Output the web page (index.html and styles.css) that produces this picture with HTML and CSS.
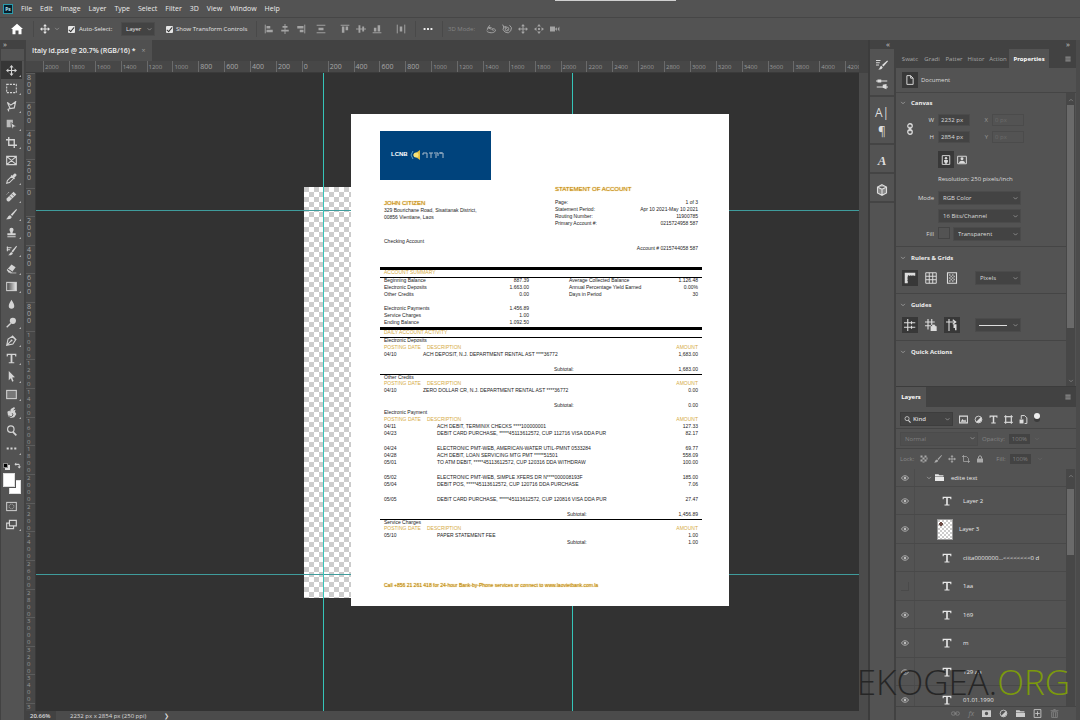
FILE: index.html
```html
<!DOCTYPE html>
<html lang="en">
<head>
<meta charset="utf-8">
<title>Italy id.psd</title>
<link rel="stylesheet" href="styles.css">
</head>
<body>
<svg class="sprite" aria-hidden="true">
  <symbol id="move" viewBox="0 0 16 16"><path d="M8 0l3 3.500H8.800v3.700h3.700V5L16 8l-3.500 3V8.800H8.800v3.700H11L8 16l-3-3.500h2.200V8.800H3.500V11L0 8l3.500-3v2.200h3.700V3.500H5z" fill="currentColor"/></symbol>
  <symbol id="marquee" viewBox="0 0 16 16"><rect x="1" y="2" width="14" height="12" fill="none" stroke="currentColor" stroke-width="1.5" stroke-dasharray="3 1.6"/></symbol>
  <symbol id="lasso" viewBox="0 0 16 16"><path d="M2 2l5 4 7-5-2 9-6 1zM6 11l-3 1 1 3" fill="none" stroke="currentColor" stroke-width="1.7"/></symbol>
  <symbol id="objsel" viewBox="0 0 16 16"><path d="M1 1h9v5H7v6H1z" fill="currentColor" opacity=".8"/><path d="M7 5l8 6-4 .5L9 15z" fill="currentColor" stroke="#535353"/></symbol>
  <symbol id="crop" viewBox="0 0 16 16"><path d="M4 0v12h12M0 4h12v12" fill="none" stroke="currentColor" stroke-width="2"/></symbol>
  <symbol id="frame" viewBox="0 0 16 16"><path d="M1 2h14v12H1zM1 2l14 12M15 2L1 14" fill="none" stroke="currentColor" stroke-width="1.6"/></symbol>
  <symbol id="dropper" viewBox="0 0 16 16"><path d="M1 15l1-4 6-6 3 3-6 6z" fill="none" stroke="currentColor" stroke-width="1.5"/><path d="M7 4l5 5 1-1-1-1 3-3c1-2-1-4-3-3L9 4 8 3z" fill="currentColor"/></symbol>
  <symbol id="heal" viewBox="0 0 16 16"><path d="M1 11l10-10 4 4L5 15c-3 1-5-1-4-4z" fill="currentColor"/><path d="M5 7l4 4M8 4l4 4" stroke="#535353"/><path d="M1 5l4-4" stroke="currentColor" stroke-dasharray="2 1"/></symbol>
  <symbol id="brush" viewBox="0 0 16 16"><path d="M15 0l1 1-7 9-2-2z" fill="currentColor"/><path d="M6 9l2.500 2.500C7 15 4 15 0 15c3-2 2-5 6-6z" fill="currentColor"/></symbol>
  <symbol id="stamp" viewBox="0 0 16 16"><path d="M8 1a3 3 0 013 3c0 2-1.500 2-1.500 5H14v3H2V9h4.500C6.500 6 5 6 5 4a3 3 0 013-3zM2 13.500h12V15H2z" fill="currentColor"/></symbol>
  <symbol id="history" viewBox="0 0 16 16"><path d="M15 1l1 1-6 9-2-2zM8 10l2 2c-1 3-4 3-7 3 3-2 2-4 5-5z" fill="currentColor"/><path d="M1 4h7M1 7h5M2 2v7" stroke="currentColor" stroke-width="1.500"/></symbol>
  <symbol id="eraser" viewBox="0 0 16 16"><path d="M1 10l7-8 6 4-6 8H4z" fill="currentColor"/><path d="M3 9l6 4" stroke="#535353" stroke-width="1.500"/><path d="M6 14.500h9" stroke="currentColor"/></symbol>
  <symbol id="gradient" viewBox="0 0 16 16"><defs><linearGradient id="gr"><stop stop-color="#444"/><stop offset="1" stop-color="#e8e8e8"/></linearGradient></defs><rect x="1" y="2" width="14" height="12" fill="url(#gr)" stroke="currentColor" stroke-width="1.500"/></symbol>
  <symbol id="drop" viewBox="0 0 16 16"><path d="M8 1c2 4 4 6 4 9a4 4 0 01-8 0c0-3 2-5 4-9z" fill="currentColor"/></symbol>
  <symbol id="dodge" viewBox="0 0 16 16"><circle cx="10" cy="5.500" r="4.500" fill="currentColor"/><path d="M7 9l-6 6" stroke="currentColor" stroke-width="2"/></symbol>
  <symbol id="pen" viewBox="0 0 16 16"><path d="M1 15l2-9 6-4 5 5-4 6zM1 15l6-6M9 1l6 6" fill="none" stroke="currentColor" stroke-width="1.600"/><circle cx="8" cy="8" r="1.500" fill="currentColor"/></symbol>
  <symbol id="type" viewBox="0 0 16 16"><path d="M1 1h14v4h-1.500L13 3H9.300v10.500H12V15H4v-1.500h2.700V3H3l-.5 2H1z" fill="currentColor"/></symbol>
  <symbol id="arrow" viewBox="0 0 16 16"><path d="M4 0l9 9-4 .5 2 5-2 1-2-5-3 3z" fill="currentColor"/></symbol>
  <symbol id="rect" viewBox="0 0 16 16"><rect x="1" y="2" width="14" height="12" fill="#777" stroke="currentColor" stroke-width="1.500"/></symbol>
  <symbol id="hand" viewBox="0 0 16 16"><path d="M2 7l3-2 1 2 1-4 5-3 1 2-3 3 4-1-1 3 2 3-3 5-5 1-4-3z" fill="currentColor"/><path d="M4 12a3 3 0 105-3" fill="none" stroke="#535353" stroke-width="1.300"/></symbol>
  <symbol id="zoom" viewBox="0 0 16 16"><circle cx="7" cy="6" r="4.700" fill="none" stroke="currentColor" stroke-width="1.700"/><path d="M10 10l5 5" stroke="currentColor" stroke-width="2.400"/></symbol>
  <symbol id="dots" viewBox="0 0 16 16"><path d="M1 6.500h3v3H1zM6.500 6.500h3v3h-3zM12 6.500h3v3h-3z" fill="currentColor"/></symbol>
  <symbol id="mask" viewBox="0 0 16 16"><rect x="1" y="2" width="14" height="12" fill="none" stroke="currentColor" stroke-width="1.400"/><circle cx="8" cy="8" r="3.500" fill="none" stroke="currentColor" stroke-dasharray="1.500 1"/></symbol>
  <symbol id="screens" viewBox="0 0 16 16"><path d="M5 2h10v8H5zM5 6H1v8h10v-4" fill="none" stroke="currentColor" stroke-width="1.700"/></symbol>
  <symbol id="home" viewBox="0 0 16 16"><path d="M8 1l8 7h-2v7h-4v-5H6v5H2V8H0z" fill="currentColor"/></symbol>
  <symbol id="chev" viewBox="0 0 16 16"><path d="M3 5l5 5 5-5" fill="none" stroke="currentColor" stroke-width="2"/></symbol>
  <symbol id="al" viewBox="0 0 16 16"><path d="M2 1v14" stroke="currentColor" stroke-width="1.500"/><path d="M4 3h6v4H4zM4 9h10v4H4z" fill="currentColor"/></symbol>
  <symbol id="ac" viewBox="0 0 16 16"><path d="M8 0v16" stroke="currentColor" stroke-width="1.500"/><path d="M4 3h8v3H4zM2 9h12v3H2z" fill="currentColor"/></symbol>
  <symbol id="bars" viewBox="0 0 16 16"><path d="M1 2h14M1 14h14" stroke="currentColor" stroke-width="1.500"/><path d="M4 6h8v4H4z" fill="currentColor"/></symbol>
  <symbol id="orbit" viewBox="0 0 16 16"><path d="M3 10C0 7 5 4 9 6M6 2L3 6l5 2M1 11c3 4 12 4 14 0 1-3-3-4-6-3l3 3" fill="none" stroke="currentColor" stroke-width="1.600"/></symbol>
  <symbol id="roll" viewBox="0 0 16 16"><path d="M3 4a6.500 6.500 0 109-2M1 1l2 4 4-1" fill="none" stroke="currentColor" stroke-width="1.600"/><circle cx="8" cy="8" r="3" fill="none" stroke="currentColor" stroke-width="1.400"/><path d="M5 5l5 5" stroke="currentColor"/></symbol>
  <symbol id="slide" viewBox="0 0 16 16"><path d="M8 0l3 4H5zM8 16l3-4H5zM0 8l4-3v6zM16 8l-4-3v6zM6.500 6.500h3v3h-3z" fill="currentColor"/></symbol>
  <symbol id="cam" viewBox="0 0 16 16"><path d="M0 4h8v8H0zM8 8l3-3v6zM15 4l-3 4 3 4" fill="currentColor"/></symbol>
  <symbol id="brushset" viewBox="0 0 16 16"><path d="M0 2h6M0 5h5M0 8h4" stroke="currentColor" stroke-width="1.300"/><path d="M15 2l1 1-6 7-2-2zM7 9l2 2c-1 3-3 3-6 3 2-1 2-4 4-5z" fill="currentColor"/></symbol>
  <symbol id="sliders" viewBox="0 0 16 16"><path d="M0 4h15M1 12h15" stroke="currentColor" stroke-width="1.600"/><path d="M2 2h5v4H2zM9 9l5-1v7l-5-2z" fill="currentColor"/></symbol>
  <symbol id="cube" viewBox="0 0 16 16"><path d="M8 1l6 3v8l-6 3-6-3V4zM2 4l6 3 6-3M8 7v8" fill="#888" stroke="currentColor" stroke-width="1.500"/></symbol>
  <symbol id="page" viewBox="0 0 16 16"><path d="M3 1h6l4 4v10H3zM9 1v4h4" fill="none" stroke="currentColor" stroke-width="1.500"/></symbol>
  <symbol id="link" viewBox="0 0 16 16"><rect x="5" y="1" width="6" height="6" rx="3" fill="none" stroke="currentColor" stroke-width="1.700"/><rect x="5" y="9" width="6" height="6" rx="3" fill="none" stroke="currentColor" stroke-width="1.700"/><path d="M8 5v6" stroke="currentColor" stroke-width="1.700"/></symbol>
  <symbol id="portrait" viewBox="0 0 16 16"><path d="M2 1h12v14H2z" fill="none" stroke="currentColor" stroke-width="1.500"/><circle cx="8" cy="5" r="2" fill="currentColor"/><path d="M5 8h6v4H9.500v2h-3v-2H5z" fill="currentColor"/></symbol>
  <symbol id="landscape" viewBox="0 0 16 16"><path d="M1 2h14v12H1z" fill="none" stroke="currentColor" stroke-width="1.500"/><circle cx="8" cy="6" r="2.300" fill="currentColor"/><path d="M3 13c1-5 9-5 10 0z" fill="currentColor"/></symbol>
  <symbol id="rulers" viewBox="0 0 16 16"><path d="M1 1h14v4H5v10H1z" fill="currentColor"/><path d="M6 4v1M9 4v1M12 4v1M4 8h1M4 11h1" stroke="#383838"/></symbol>
  <symbol id="grid" viewBox="0 0 16 16"><path d="M1 1h14v14H1zM5.700 1v14M10.300 1v14M1 5.700h14M1 10.300h14" fill="none" stroke="currentColor" stroke-width="1.300"/></symbol>
  <symbol id="pixgrid" viewBox="0 0 16 16"><path d="M2 1h12v14H2z" fill="none" stroke="currentColor" stroke-width="1.500"/><path d="M4 3h2v2H4zM8 3h2v2H8zM6 5h2v2H6zM10 5h2v2h-2zM4 7h2v2H4zM8 7h2v2H8zM6 9h2v2H6zM10 9h2v2h-2zM4 11h2v2H4zM8 11h2v2H8z" fill="currentColor" opacity=".7"/></symbol>
  <symbol id="guides" viewBox="0 0 16 16"><path d="M5 0v16M0 5h15M0 11h15M10 3v4M10 9v4" stroke="currentColor" stroke-width="1.500"/></symbol>
  <symbol id="guidelock" viewBox="0 0 16 16"><path d="M4 0v14M9 0v8M0 4h13M0 9h8" stroke="currentColor" stroke-width="1.500"/><path d="M8 10h7v6H8zM10 10V8h3v2" fill="currentColor" stroke="currentColor"/></symbol>
  <symbol id="smart" viewBox="0 0 16 16"><path d="M4 0v16M0 4h12M9 1l4 3-4 3" fill="none" stroke="currentColor" stroke-width="1.500"/><path d="M10 7h4v8h-2v-3h-2z" fill="currentColor"/></symbol>
  <symbol id="image" viewBox="0 0 16 16"><path d="M1 2h14v12H1z" fill="none" stroke="currentColor" stroke-width="1.800"/><path d="M3 12l3-5 3 3 2-2 2 4z" fill="currentColor"/></symbol>
  <symbol id="adjust" viewBox="0 0 16 16"><circle cx="8" cy="8" r="6" fill="none" stroke="currentColor" stroke-width="1.500"/><path d="M12.500 3.500a6.500 6.500 0 01-9 9z" fill="currentColor"/></symbol>
  <symbol id="shape" viewBox="0 0 16 16"><path d="M3 3h10v10H3zM3 0v16M13 0v16M0 3h16M0 13h16" fill="none" stroke="currentColor" stroke-width="1.500"/></symbol>
  <symbol id="smartobj" viewBox="0 0 16 16"><path d="M4 7V1h6l4 4v10h-4" fill="none" stroke="currentColor" stroke-width="1.700"/><path d="M1 8h7v7H1z" fill="currentColor"/></symbol>
  <symbol id="checks" viewBox="0 0 16 16"><path d="M1 1h4v4H1zM9 1h4v4H9zM5 5h4v4H5zM1 9h4v4H1zM9 9h4v4H9zM13 5h2v4h-2zM5 13h4v2H5z" fill="currentColor"/></symbol>
  <symbol id="lock" viewBox="0 0 16 16"><path d="M2 7h12v8H2z" fill="currentColor"/><path d="M5 7V4c0-3 6-3 6 0v3" fill="none" stroke="currentColor" stroke-width="2"/></symbol>
  <symbol id="nest" viewBox="0 0 16 16"><path d="M3 0v13h13M0 3h9l4 4v9" fill="none" stroke="currentColor" stroke-width="1.500"/></symbol>
  <symbol id="eye" viewBox="0 0 16 16"><path d="M1 8c3-6 11-6 14 0-3 6-11 6-14 0z" fill="none" stroke="currentColor" stroke-width="1.600"/><circle cx="8" cy="8" r="2.600" fill="currentColor"/></symbol>
  <symbol id="folder" viewBox="0 0 16 16"><path d="M0 2h6l2 2h7v2H0zM0 7h16v7H0z" fill="currentColor"/></symbol>
  <symbol id="chain" viewBox="0 0 16 16"><rect x="0.800" y="5" width="7" height="6" rx="3" fill="none" stroke="currentColor" stroke-width="1.500"/><rect x="8" y="5" width="7" height="6" rx="3" fill="none" stroke="currentColor" stroke-width="1.500"/><path d="M5 8h6" stroke="currentColor"/></symbol>
  <symbol id="addmask" viewBox="0 0 16 16"><path d="M0 2h16v12H0zM8 5a3 3 0 100 6 3 3 0 000-6z" fill="currentColor" fill-rule="evenodd"/></symbol>
  <symbol id="new" viewBox="0 0 16 16"><path d="M2 1h12v14H2zM8 4v8M4 8h8" fill="none" stroke="currentColor" stroke-width="1.500"/></symbol>
  <symbol id="trash" viewBox="0 0 16 16"><path d="M1 3h14M6 1h4M3 5h10v10H3zM6 6v8M10 6v8" fill="none" stroke="currentColor" stroke-width="1.500"/></symbol>
  <symbol id="burger" viewBox="0 0 16 16"><path d="M1 3h14M1 8h14M1 13h14" stroke="currentColor" stroke-width="2"/></symbol>
  <symbol id="swap" viewBox="0 0 16 16"><path d="M1 5l4-4v3h6c2 0 2 2 2 6h3l-4 5-4-5h3V7H5v2z" fill="currentColor"/></symbol>
</svg>

<div class="top-tab"></div>
<nav class="menubar">
  <span class="ps">Ps</span>
  <button>File</button><button>Edit</button><button>Image</button><button>Layer</button><button>Type</button><button>Select</button><button>Filter</button><button>3D</button><button>View</button><button>Window</button><button>Help</button>
</nav>

<div class="options">
  <button class="home" aria-label="Home"><svg><use href="#home"/></svg></button>
  <i class="sep"></i>
  <button class="current" aria-label="Move tool"><svg><use href="#move"/></svg><svg class="tiny"><use href="#chev"/></svg></button>
  <label class="check"><input type="checkbox" checked>Auto-Select:</label>
  <select class="auto" aria-label="Auto-select"><option>Layer</option></select>
  <label class="check show"><input type="checkbox" checked>Show Transform Controls</label>
  <i class="sep"></i>
  <div class="group">
    <button aria-label="Align left"><svg><use href="#al"/></svg></button>
    <button aria-label="Align centre"><svg><use href="#ac"/></svg></button>
    <button aria-label="Align right"><svg class="flip"><use href="#al"/></svg></button>
  </div>
  <div class="group"><button aria-label="Distribute rows"><svg><use href="#bars"/></svg></button></div>
  <div class="group wide">
    <button aria-label="Align top"><svg class="quarter"><use href="#al"/></svg></button>
    <button aria-label="Align middle"><svg class="quarter"><use href="#ac"/></svg></button>
    <button aria-label="Align bottom"><svg class="back"><use href="#al"/></svg></button>
  </div>
  <div class="group last"><button aria-label="Distribute columns"><svg class="quarter"><use href="#bars"/></svg></button></div>
  <i class="sep"></i>
  <div class="group bright"><button aria-label="More"><svg><use href="#dots"/></svg></button></div>
  <i class="sep"></i>
  <span class="mode3d">3D Mode:</span>
  <div class="group">
    <button aria-label="Orbit"><svg><use href="#orbit"/></svg></button>
    <button aria-label="Roll"><svg><use href="#roll"/></svg></button>
    <button aria-label="Pan"><svg><use href="#move"/></svg></button>
    <button aria-label="Slide"><svg><use href="#slide"/></svg></button>
    <button aria-label="Camera"><svg><use href="#cam"/></svg></button>
  </div>
</div>

<div class="workspace">
  <aside class="tools">
    <div class="collapse">»</div>
    <div class="grip"></div>
    <button class="on" aria-label="Move"><svg><use href="#move"/></svg></button>
    <button aria-label="Marquee"><svg><use href="#marquee"/></svg></button>
    <button aria-label="Lasso"><svg><use href="#lasso"/></svg></button>
    <button aria-label="Object selection"><svg><use href="#objsel"/></svg></button>
    <button aria-label="Crop"><svg><use href="#crop"/></svg></button>
    <button class="solo" aria-label="Frame"><svg><use href="#frame"/></svg></button>
    <button aria-label="Eyedropper"><svg><use href="#dropper"/></svg></button>
    <button aria-label="Healing brush"><svg><use href="#heal"/></svg></button>
    <button aria-label="Brush"><svg><use href="#brush"/></svg></button>
    <button aria-label="Clone stamp"><svg><use href="#stamp"/></svg></button>
    <button aria-label="History brush"><svg><use href="#history"/></svg></button>
    <button aria-label="Eraser"><svg><use href="#eraser"/></svg></button>
    <button aria-label="Gradient"><svg><use href="#gradient"/></svg></button>
    <button class="solo" aria-label="Blur"><svg><use href="#drop"/></svg></button>
    <button aria-label="Dodge"><svg><use href="#dodge"/></svg></button>
    <button aria-label="Pen"><svg><use href="#pen"/></svg></button>
    <button aria-label="Type"><svg><use href="#type"/></svg></button>
    <button aria-label="Path selection"><svg><use href="#arrow"/></svg></button>
    <button aria-label="Rectangle"><svg><use href="#rect"/></svg></button>
    <button aria-label="Hand"><svg><use href="#hand"/></svg></button>
    <button class="solo" aria-label="Zoom"><svg><use href="#zoom"/></svg></button>
    <button aria-label="Edit toolbar"><svg><use href="#dots"/></svg></button>
    <div class="defaults"><span class="bw"></span><svg><use href="#swap"/></svg></div>
    <div class="swatches"><span></span><span></span></div>
    <button class="solo" aria-label="Quick mask"><svg><use href="#mask"/></svg></button>
    <button aria-label="Screen mode"><svg><use href="#screens"/></svg></button>
  </aside>

  <main class="document">
    <div class="tabs"><button class="tab">Italy id.psd @ 20.7% (RGB/16) * <span>×</span></button></div>
    <div class="hruler">
      <span class="k">2000</span><span class="k">1800</span><span class="k">1600</span><span class="k">1400</span><span class="k">1200</span><span class="k">1000</span><span>800</span><span>600</span><span>400</span><span>200</span><span>0</span><span>200</span><span>400</span><span>600</span><span>800</span><span class="k">1000</span><span class="k">1200</span><span class="k">1400</span><span class="k">1600</span><span class="k">1800</span><span class="k">2000</span><span class="k">2200</span><span class="k">2400</span><span class="k">2600</span><span class="k">2800</span><span class="k">3000</span><span class="k">3200</span><span class="k">3400</span><span class="k">3600</span><span class="k">3800</span><span class="k">4000</span><span class="k last">4200</span>
    </div>
    <div class="stage">
      <div class="vruler">
        <span>800</span><span>600</span><span>400</span><span>200</span><span>0</span><span>200</span><span>400</span><span>600</span><span>800</span><span class="k">1000</span><span class="k">1200</span><span class="k">1400</span><span class="k">1600</span><span class="k">1800</span><span class="k">2000</span><span class="k">2200</span><span class="k">2400</span><span class="k">2600</span><span class="k">2800</span><span class="k">3000</span><span class="k">3200</span><span class="k">3400</span><span class="k last">3</span>
      </div>
      <div class="canvas">
        <div class="checker"></div>
        <i class="guide h one"></i><i class="guide h two"></i><i class="guide v one"></i><i class="guide v two"></i>
        <article class="paper">
          <div class="logo">
            <b>LCNB</b>
            <svg class="mark" viewBox="0 0 12 10"><path d="M3 1L1 5l2 4" fill="none" stroke="#5aa0c8"/><path d="M3 5l7-5v10z" fill="#e2c044"/><circle cx="6" cy="5" r="2.500" fill="#f6e27a"/></svg>
            <svg class="script" viewBox="0 0 22 8"><path d="M1 2h4v5M1 2v2M7 2h4M9 2v5M12 2h4v3M14 3v4M17 2h4v5M19 1v2" fill="none" stroke="#a9bccb"/></svg>
          </div>
          <div class="head">
            <div class="who">
              <h2>JOHN CITIZEN</h2>
              <p>329 Bourichane Road, Sisattanak District,<br>00856 Vientiane, Laos</p>
              <p class="kind">Checking Account</p>
            </div>
            <div class="meta">
              <h2>STATEMENT OF ACCOUNT</h2>
              <dl>
                <dt>Page:</dt><dd>1 of 3</dd>
                <dt>Statement Period:</dt><dd>Apr 10 2021-May 10 2021</dd>
                <dt>Routing Number:</dt><dd>11900785</dd>
                <dt>Primary Account #:</dt><dd>0215724958 587</dd>
              </dl>
              <p class="acct">Account # 0215744058 587</p>
            </div>
          </div>
          <h3 class="band">ACCOUNT SUMMARY</h3>
          <div class="summary">
            <dl>
              <dt>Beginning Balance</dt><dd>887.39</dd>
              <dt>Electronic Deposits</dt><dd>1.663.00</dd>
              <dt>Other Credits</dt><dd>0.00</dd>
              <dt class="more">Electronic Payments</dt><dd class="more">1.456.89</dd>
              <dt>Service Charges</dt><dd>1.00</dd>
              <dt>Ending Balance</dt><dd>1.092.50</dd>
            </dl>
            <dl>
              <dt>Average Collected Balance</dt><dd>1.126.48</dd>
              <dt>Annual Percentage Yield Earned</dt><dd>0.00%</dd>
              <dt>Days in Period</dt><dd>30</dd>
            </dl>
          </div>
          <h3 class="band">DAILY ACCOUNT ACTIVITY</h3>
          <table class="first">
            <caption>Electronic Deposits</caption>
            <tr><th>POSTING DATE</th><th>DESCRIPTION</th><th>AMOUNT</th></tr>
            <tr><td>04/10</td><td>ACH DEPOSIT, N.J. DEPARTMENT RENTAL AST ****36772</td><td>1,683.00</td></tr>
            <tr class="sum gap"><td></td><td>Subtotal:</td><td>1,683.00</td></tr>
          </table>
          <table class="ruled">
            <caption>Other Credits</caption>
            <tr><th>POSTING DATE</th><th>DESCRIPTION</th><th>AMOUNT</th></tr>
            <tr><td>04/10</td><td>ZERO DOLLAR CR, N.J. DEPARTMENT RENTAL AST ****36772</td><td>0.00</td></tr>
            <tr class="sum gap"><td></td><td>Subtotal:</td><td>0.00</td></tr>
          </table>
          <table class="inset">
            <caption>Electronic Payment</caption>
            <tr><th>POSTING DATE</th><th>DESCRIPTION</th><th>AMOUNT</th></tr>
            <tr><td>04/11</td><td>ACH DEBIT, TERMINIX CHECKS ****100000001</td><td>127.33</td></tr>
            <tr><td>04/23</td><td>DEBIT CARD PURCHASE, *****45113612572, CUP 112716 VISA DDA PUR</td><td>82.17</td></tr>
            <tr class="gap"><td>04/24</td><td>ELECTRONIC PMT-WEB, AMERICAN-WATER UTIL-PMNT 0533284</td><td>69.77</td></tr>
            <tr><td>04/28</td><td>ACH DEBIT, LOAN SERVICING MTG PMT *****51501</td><td>558.09</td></tr>
            <tr><td>05/01</td><td>TO ATM DEBIT, *****45113612572, CUP 120316 DDA WITHDRAW</td><td>100.00</td></tr>
            <tr class="gap"><td>05/02</td><td>ELECTRONIC PMT-WEB, SIMPLE XFERS DR N****000008193F</td><td>185.00</td></tr>
            <tr><td>05/04</td><td>DEBIT POS, *****45113612572, CUP 120716 DDA PURCHASE</td><td>7.06</td></tr>
            <tr class="gap"><td>05/05</td><td>DEBIT CARD PURCHASE, *****45113612572, CUP 120816 VISA DDA PUR</td><td>27.47</td></tr>
            <tr class="sum gap"><td></td><td>Subtotal:</td><td>1,456.89</td></tr>
          </table>
          <table class="inset ruled">
            <caption>Service Charges</caption>
            <tr><th>POSTING DATE</th><th>DESCRIPTION</th><th>AMOUNT</th></tr>
            <tr><td>05/10</td><td>PAPER STATEMENT FEE</td><td>1.00</td></tr>
            <tr class="sum"><td></td><td>Subtotal:</td><td>1.00</td></tr>
          </table>
          <p class="call">Call +856 21 261 418 for 24-hour Bank-by-Phone services or connect to www.laovietbank.com.la</p>
        </article>
      </div>
      <div class="vscroll"></div>
    </div>
    <footer class="status"><b>20.66%</b><span>2232 px x 2854 px (250 ppi)</span><span class="more">❯</span></footer>
  </main>

  <aside class="strip">
    <div class="collapse">«</div>
    <div class="set"><svg><use href="#brushset"/></svg><svg><use href="#sliders"/></svg></div>
    <div class="set"><span class="glyph">A|</span><span class="glyph">¶</span></div>
    <div class="set"><span class="glyph script-a">A</span></div>
    <div class="set"><svg><use href="#cube"/></svg></div>
  </aside>

  <aside class="panels">
    <div class="collapse">»</div>
    <section class="props">
      <div class="ptabs"><button>Swatc</button><button>Gradi</button><button>Patter</button><button>Histor</button><button>Action</button><button class="on">Properties</button><svg class="menu"><use href="#burger"/></svg></div>
      <div class="doc"><span class="icon on"><svg><use href="#page"/></svg></span>Document</div>
      <div class="scroller">
        <div class="sections">
          <div class="sect canvas-sect">
            <h4><svg><use href="#chev"/></svg>Canvas</h4>
            <div class="dims">
              <svg class="link"><use href="#link"/></svg>
              <label for="w">W</label><input id="w" value="2232 px"><label class="dim" for="x">X</label><input id="x" class="dim" value="0 px" disabled>
              <label for="h">H</label><input id="h" value="2854 px"><label class="dim" for="y">Y</label><input id="y" class="dim" value="0 px" disabled>
            </div>
            <div class="form">
              <div class="orient"><button class="icon on" aria-label="Portrait"><svg><use href="#portrait"/></svg></button><button class="icon" aria-label="Landscape"><svg><use href="#landscape"/></svg></button></div>
              <p>Resolution: 250 pixels/inch</p>
              <label for="mode">Mode</label><select id="mode"><option>RGB Color</option></select>
              <select class="depth" aria-label="Depth"><option>16 Bits/Channel</option></select>
              <label for="fill">Fill</label><div class="fill"><i></i><select id="fill"><option>Transparent</option></select></div>
            </div>
          </div>
          <div class="sect">
            <h4><svg><use href="#chev"/></svg>Rulers &amp; Grids</h4>
            <div class="row"><button class="icon on" aria-label="Rulers"><svg><use href="#rulers"/></svg></button><button class="icon" aria-label="Grid"><svg><use href="#grid"/></svg></button><button class="icon" aria-label="Pixel grid"><svg><use href="#pixgrid"/></svg></button><select aria-label="Units"><option>Pixels</option></select></div>
          </div>
          <div class="sect">
            <h4><svg><use href="#chev"/></svg>Guides</h4>
            <div class="row"><button class="icon on" aria-label="Guides"><svg><use href="#guides"/></svg></button><button class="icon" aria-label="Lock guides"><svg><use href="#guidelock"/></svg></button><button class="icon on" aria-label="Smart guides"><svg><use href="#smart"/></svg></button><select class="line" aria-label="Guide style"><option></option></select></div>
          </div>
          <div class="sect"><h4><svg><use href="#chev"/></svg>Quick Actions</h4></div>
        </div>
        <div class="sbar"><svg class="up"><use href="#chev"/></svg><i></i><svg><use href="#chev"/></svg></div>
      </div>
    </section>

    <section class="layers">
      <div class="ptabs"><button class="on">Layers</button><svg class="menu"><use href="#burger"/></svg></div>
      <div class="filter">
        <div class="search"><svg><use href="#zoom"/></svg><select aria-label="Filter kind"><option>Kind</option></select></div>
        <svg><use href="#image"/></svg><svg><use href="#adjust"/></svg><svg><use href="#type"/></svg><svg><use href="#shape"/></svg><svg><use href="#smartobj"/></svg><i></i>
      </div>
      <div class="blend"><select aria-label="Blend mode" disabled><option>Normal</option></select><label for="op">Opacity:</label><input id="op" value="100%" disabled><svg><use href="#chev"/></svg></div>
      <div class="locks"><span>Lock:</span><svg><use href="#checks"/></svg><svg><use href="#brush"/></svg><svg><use href="#move"/></svg><svg><use href="#nest"/></svg><svg><use href="#lock"/></svg><label for="fo">Fill:</label><input id="fo" value="100%" disabled><svg class="small"><use href="#chev"/></svg></div>
      <div class="list">
        <ul>
          <li class="folder"><span class="vis"><svg><use href="#eye"/></svg></span><svg class="open"><use href="#chev"/></svg><svg class="fold"><use href="#folder"/></svg>edite text</li>
          <li><span class="vis"><svg><use href="#eye"/></svg></span><svg class="t"><use href="#type"/></svg>Layer 2</li>
          <li><span class="vis"><svg><use href="#eye"/></svg></span><span class="thumb"></span>Layer 3</li>
          <li><span class="vis"><svg><use href="#eye"/></svg></span><svg class="t"><use href="#type"/></svg>ciita0000000...&lt;&lt;&lt;&lt;&lt;&lt;&lt;&lt;0 d</li>
          <li><span class="vis"><i></i></span><svg class="t"><use href="#type"/></svg>1aa</li>
          <li><span class="vis"><svg><use href="#eye"/></svg></span><svg class="t"><use href="#type"/></svg>169</li>
          <li><span class="vis"><svg><use href="#eye"/></svg></span><svg class="t"><use href="#type"/></svg>m</li>
          <li><span class="vis"><svg><use href="#eye"/></svg></span><svg class="t"><use href="#type"/></svg>129 aa</li>
          <li><span class="vis"><svg><use href="#eye"/></svg></span><svg class="t"><use href="#type"/></svg>01.01.1990</li>
        </ul>
        <div class="sbar"><svg class="up"><use href="#chev"/></svg><i></i></div>
      </div>
      <div class="actions"><svg class="off"><use href="#chain"/></svg><em>fx</em><svg><use href="#addmask"/></svg><svg><use href="#adjust"/></svg><svg><use href="#folder"/></svg><svg><use href="#new"/></svg><svg class="off"><use href="#trash"/></svg></div>
    </section>
  </aside>
</div>
<div class="watermark">EKOGEA.<span>ORG</span></div>
</body>
</html>
```
FILE: styles.css
```css
* { box-sizing: border-box; }
body, h2, h3, h4, p, dl, dd, ul { margin: 0; padding: 0; }
body {
  height: 100vh;
  display: flex;
  flex-direction: column;
  overflow: hidden;
  position: relative;
  background: #535353;
  color: #dcdcdc;
  font: 6px/8px "Open Sans", "Noto Sans", sans-serif;
}
.sprite { position: absolute; width: 0; height: 0; }
svg { width: 10px; height: 10px; flex: none; display: block; }
button, input, select { font: inherit; color: inherit; background: none; border: 0; padding: 0; margin: 0; border-radius: 0; min-width: 0; }
button { display: flex; align-items: center; justify-content: center; white-space: nowrap; }
select {
  appearance: none;
  height: 14px;
  padding: 0 4px;
  border: 1px solid #4b4b4b;
  background: #434343 url("data:image/svg+xml,%3Csvg xmlns='http://www.w3.org/2000/svg' viewBox='0 0 8 8'%3E%3Cpath d='M1 2l3 3 3-3' fill='none' stroke='%23b0b0b0'/%3E%3C/svg%3E") no-repeat right 2px center / 5px 5px;
}
select:disabled, input:disabled { opacity: 1; color: #808080; }

/* menu and options bars */
.top-tab { position: absolute; top: 0; left: 555px; width: 121px; height: 1px; background: #d0d0d0; }
.menubar { display: flex; align-items: center; gap: 8px; height: 17px; flex: none; padding-left: 3px; font-size: 7px; font-weight: 500; color: #ececec; }
.ps { width: 10px; height: 10px; border: 1px solid #2a9bab; background: #06202e; color: #b9e4ef; font-size: 5px; line-height: 8px; text-align: center; font-weight: 700; }
.options { display: flex; align-items: center; height: 23px; flex: none; border-top: 1px solid #464646; color: #e6e6e6; }
.options .sep { width: 1px; height: 16px; background: #494949; }
.home { width: 33px; color: #fff; }
.home svg { width: 12px; height: 12px; }
.current { width: 31px; gap: 4px; }
.tiny { width: 6px; height: 6px; color: #999; }
.check { display: flex; align-items: center; gap: 4px; width: 53px; white-space: nowrap; }
.check input { appearance: none; width: 7px; height: 7px; margin-left: 3px; background: #e6e6e6; border-radius: 1px; display: flex; justify-content: center; }
.check input::after { content: ""; width: 2px; height: 5px; border: solid #333; border-width: 0 1px 1px 0; transform: rotate(40deg); }
.auto { width: 34px; margin: 0 8px 0 3px; }
.check.show { width: 93px; gap: 3px; }
.group { display: flex; margin-left: 4px; color: #a4a4a4; }
.group button { width: 16px; height: 16px; }
.group.wide, .group.last { margin-left: 8px; }
.group.bright { color: #eee; }
.group + .sep { margin-left: 6px; }
.flip { transform: rotate(180deg); }
.quarter { transform: rotate(90deg); }
.back { transform: rotate(-90deg); }
.mode3d { width: 35px; margin-left: 5px; color: #858585; }
.mode3d + .group { margin-left: 0; }

/* workspace columns */
.workspace { flex: 1; min-height: 0; display: flex; background: #424242; }
.collapse { height: 9px; flex: none; background: #424242; color: #c8c8c8; font-size: 8px; line-height: 8px; }
.tools { width: 24px; flex: none; background: #535353; border-left: 1px solid #424242; color: #d4d4d4; display: flex; flex-direction: column; margin-right: 2px; }
.tools .collapse { padding-left: 2px; }
.grip { height: 12px; flex: none; border-bottom: 1px solid #4c4c4c; }
.tools > button { width: 21px; height: 18px; flex: none; position: relative; }
.tools > button svg { width: 11px; height: 11px; }
.tools > button.on { background: #363636; }
.tools > button:not(.solo)::after { content: ""; position: absolute; right: 1px; bottom: 2px; border: 1px solid #b0b0b0; border-left-color: transparent; border-top-color: transparent; }
.defaults { height: 16px; flex: none; display: flex; align-items: center; justify-content: space-between; padding: 0 3px 0 2px; }
.defaults svg { width: 7px; height: 7px; }
.bw { width: 5px; height: 5px; background: #000; border: 1px solid #888; box-shadow: 2px 2px 0 #ddd; }
.swatches { display: grid; grid-template-columns: 6px 6px 6px; grid-template-rows: 7px 7px 7px; padding-left: 2px; height: 24px; flex: none; }
.swatches span { background: #fff; border: 1px solid #ddd; }
.swatches span:first-child { grid-area: 1 / 1 / 3 / 3; z-index: 1; box-shadow: 0 0 0 1px #535353; }
.swatches span:last-child { grid-area: 2 / 2 / 4 / 4; }

.document { flex: 1; min-width: 0; display: flex; flex-direction: column; border-right: 2px solid #3c3c3c; }
.tabs { height: 21px; flex: none; display: flex; background: #424242; }
.tab { padding: 0 6px; background: #505050; color: #f0f0f0; font-size: 7px; font-weight: 600; gap: 6px; }
.tab span { color: #999; font-weight: 400; }
.hruler { height: 12px; flex: none; display: flex; padding-left: 17px; margin-right: 9px; background: #474747; border-bottom: 1px solid #3a3a3a; color: #a8a8a8; font-size: 7px; line-height: 12px; overflow: hidden; }
.hruler span { flex: 1; padding-left: 1px; border-left: 1px solid #6a6a6a; }
.hruler .k, .vruler .k { font-size: 6px; color: #9a9a9a; }
.hruler .last { flex: 0 0 14px; overflow: hidden; }
.stage { flex: 1; min-height: 0; display: flex; }
.vruler { width: 10px; flex: none; display: flex; flex-direction: column; background: #474747; border-right: 1px solid #3a3a3a; color: #a8a8a8; font-size: 7px; line-height: 7px; }
.vruler span { flex: 1; min-height: 0; padding: 0 4px 0 1px; border-top: 1px solid #5c5c5c; word-break: break-all; overflow: hidden; }
.vruler .last { flex: 0 0 8px; }
.canvas { flex: 1; min-width: 0; position: relative; overflow: hidden; background: #323232; }
.vscroll { width: 9px; background: #4b4b4b; }
.checker { position: absolute; left: 268px; top: 114px; width: 290px; height: 411px; background: conic-gradient(#fff 25%, #ccc 0 50%, #fff 0 75%, #ccc 0) 0 0 / 10px 10px; }
.guide { position: absolute; background: #3f9c9c; }
.guide.h { left: 0; right: 0; height: 1px; }
.guide.v { top: 0; bottom: 0; width: 1px; background: #35c4b8; }
.guide.h.one { top: 137px; }
.guide.h.two { top: 501px; }
.guide.v.one { left: 287px; }
.guide.v.two { left: 536px; }
.status { height: 9px; flex: none; display: flex; background: #4b4b4b; line-height: 10px; overflow: hidden; }
.status b { width: 30px; padding-left: 4px; background: #424242; font-weight: 600; }
.status span { padding-left: 14px; white-space: nowrap; }
.status .more { padding-left: 18px; }

/* statement page */
.paper { position: absolute; left: 315px; top: 41px; width: 378px; height: 492px; padding: 17px 27px 0 29px; background: #fff; color: #1c1c1c; font: 5px/7px "Liberation Sans", Arial, sans-serif; }
.logo { width: 111px; height: 49px; padding: 0 0 2px 11px; display: flex; align-items: center; background: #00437c; color: #fff; font-size: 6px; }
.logo .mark { width: 12px; height: 10px; margin-left: 2px; }
.logo .script { width: 22px; height: 8px; }
.head { display: flex; justify-content: space-between; height: 87px; padding: 5px 4px 0; }
.paper h2 { font-size: 6px; line-height: 8px; font-weight: 400; color: #c98f10; text-shadow: 0 0 1px #d19a1c; }
.who { padding-top: 14px; }
.kind { padding-top: 17px; }
.meta { width: 143px; }
.paper dl { display: grid; grid-template-columns: 1fr auto; }
.paper dd { text-align: right; }
.meta dl { padding-top: 6px; }
.acct { padding-top: 18px; text-align: right; }
.band { padding: 0 4px; height: 11px; border-top: 3px solid #000; border-bottom: 1px solid #000; font-size: 5px; line-height: 5px; font-weight: 400; color: #d6ab45; }
.summary { display: flex; justify-content: space-between; align-items: start; padding: 0 4px; height: 50px; margin-top: -1px; }
.summary dl:first-child { width: 145px; }
.summary dl:last-child { width: 129px; }
.paper .more { padding-top: 7px; }
.paper table { width: 100%; border-collapse: collapse; table-layout: fixed; }
.paper .first { margin-top: -1px; }
.paper caption { text-align: left; padding-left: 4px; }
.paper .ruled { margin-top: 1px; }
.paper .ruled caption { border-top: 1px solid #000; line-height: 5px; }
.paper th, .paper td { padding: 0; font-weight: 400; text-align: left; white-space: nowrap; vertical-align: bottom; }
.paper th { color: #d6ab45; }
.paper tr > :nth-child(1) { width: 43px; padding-left: 4px; }
.paper tr > :nth-child(3) { width: 44px; padding-right: 4px; text-align: right; }
.paper th:nth-child(2) { padding-left: 4px; }
.inset td:nth-child(2) { padding-left: 14px; }
.paper .sum td:nth-child(2) { padding-left: 131px; }
.paper .inset .sum td:nth-child(2) { padding-left: 144px; }
.paper .gap td { padding-top: 8px; }
.call { padding: 36px 4px 0; color: #c08a08; text-shadow: 0 0 1px #d19a1c; }

/* collapsed panel icons */
.strip { width: 24px; flex: none; display: flex; flex-direction: column; background: #535353; color: #ddd; }
.strip .collapse { text-align: right; padding-right: 4px; }
.set { display: flex; flex-direction: column; align-items: center; gap: 7px; padding: 10px 0 5px; border-bottom: 2px solid #444; }
.set svg { width: 12px; height: 12px; }
.set .glyph { height: 12px; font-size: 12px; line-height: 12px; }
.set .script-a { font: italic 700 13px/12px "Liberation Serif", serif; }

/* right-hand panels */
.panels { width: 184px; flex: none; margin-left: 2px; display: flex; flex-direction: column; background: #535353; border-right: 4px solid #4b4b4b; }
.panels .collapse { text-align: right; padding-right: 6px; }
.props { flex: none; height: 337px; display: flex; flex-direction: column; }
.ptabs { height: 19px; flex: none; display: flex; background: #424242; color: #a8a8a8; }
.ptabs button { width: 22px; overflow: hidden; }
.ptabs button:first-child { margin-left: 3px; }
.ptabs button.on { width: 40px; background: #535353; color: #fff; font-weight: 700; }
.ptabs .menu { width: 6px; height: 6px; margin: auto 5px auto auto; color: #bbb; }
.icon { width: 16px; height: 16px; flex: none; display: flex; align-items: center; justify-content: center; }
.icon.on { background: #383838; }
.doc { height: 25px; flex: none; display: flex; align-items: center; gap: 3px; padding-left: 6px; border-bottom: 1px solid #454545; }
.scroller { flex: 1; min-height: 0; display: flex; }
.sections { flex: 1; }
.sect { border-bottom: 1px solid #454545; height: 47px; padding: 7px 6px 0; }
.sect:last-child { border: 0; }
.canvas-sect { height: 154px; padding-top: 6px; }
.sect h4 { display: flex; align-items: center; gap: 5px; line-height: 8px; font-size: 6px; color: #eee; margin-left: -2px; }
.sect h4 svg { width: 6px; height: 6px; color: #aaa; }
.dims { display: grid; grid-template-columns: 16px 12px 32px 14px 32px; gap: 5px 4px; padding-top: 7px; align-items: center; }
.dims .link { grid-row: span 2; width: 12px; height: 12px; margin-left: 2px; }
.dims label, .form label { text-align: right; }
.dims input { width: 100%; height: 12px; padding-left: 2px; background: #434343; border: 1px solid #4b4b4b; }
.dims input.dim { background: none; color: #6c6c6c; }
label.dim { color: #999; }
.form { display: grid; grid-template-columns: 32px 83px; gap: 4px; padding-top: 8px; align-items: center; }
.form > .orient, .form > p, .form > .depth { grid-column: 2; }
.form > p { line-height: 15px; white-space: nowrap; }
.orient { display: flex; }
.orient .icon { width: 16px; height: 17px; }
.fill { display: flex; gap: 3px; }
.fill i { width: 12px; height: 12px; border: 1px solid #444; }
.fill select { flex: 1; }
.row { display: flex; align-items: center; gap: 5px; padding: 8px 0 0; }
.row .icon svg { width: 12px; height: 12px; }
.row select { width: 46px; margin-left: 10px; }
.row select.line { background-image: linear-gradient(#ddd, #ddd), url("data:image/svg+xml,%3Csvg xmlns='http://www.w3.org/2000/svg' viewBox='0 0 8 8'%3E%3Cpath d='M1 2l3 3 3-3' fill='none' stroke='%23b0b0b0'/%3E%3C/svg%3E"); background-size: 28px 1px, 5px 5px; background-position: 3px center, right 2px center; }
.sbar { width: 9px; margin-right: 1px; flex: none; display: flex; flex-direction: column; align-items: center; background: #474747; }
.sbar svg { width: 6px; height: 6px; margin: 4px 0 2px; color: #888; }
.sbar .up { transform: rotate(180deg); }
.sbar i { width: 7px; height: 223px; background: #6a6a6a; }
.sbar svg:last-child { margin-top: auto; }

.layers { flex: 1; min-height: 0; display: flex; flex-direction: column; border-top: 1px solid #3c3c3c; }
.layers .ptabs button.on { width: 30px; margin: 0; }
.layers .ptabs { height: 20px; }
.filter { height: 22px; flex: none; display: flex; align-items: center; gap: 6px; padding: 5px 4px 2px; border-bottom: 1px solid #454545; color: #ddd; }
.filter svg { width: 9px; height: 9px; }
.search { width: 53px; display: flex; align-items: center; background: #434343; border: 1px solid #3d3d3d; padding-left: 3px; }
.search svg { width: 7px; height: 7px; }
.search select { flex: 1; height: 12px; border: 0; font-weight: 600; padding-left: 2px; }
.filter i { width: 6px; height: 6px; border-radius: 50%; background: #eee; box-shadow: 0 3px 0 #3c3c3c; margin-bottom: 6px; }
.blend { height: 20px; flex: none; display: flex; align-items: center; gap: 4px; padding-left: 4px; border-bottom: 1px solid #454545; color: #858585; }
.blend select { width: 78px; background-color: #4f4f4f; }
.blend input, .locks input { width: 21px; height: 10px; background: #434343; padding-left: 3px; }
.blend svg, .locks .small { width: 6px; height: 6px; color: #666; }
.locks { height: 20px; flex: none; display: flex; align-items: center; gap: 6px; padding-left: 4px; color: #8a8a8a; }
.locks svg { width: 8px; height: 8px; color: #aaa; }
.locks label { margin-left: 6px; }
.locks input { margin-left: -2px; }
.list { flex: 1; min-height: 0; display: flex; overflow: hidden; }
.list ul { flex: 1; list-style: none; }
.list li { height: 28px; display: flex; align-items: center; border-bottom: 1px solid #494949; color: #e8e8e8; }
.list li:nth-child(odd) { height: 29px; }
.list li.folder { height: 18px; }
.vis { width: 19px; align-self: stretch; display: flex; align-items: center; justify-content: center; border-right: 1px solid #4c4c4c; }
.vis svg { width: 8px; height: 8px; color: #bbb; }
.vis i { width: 8px; height: 9px; border: solid #4a4a4a; border-width: 0 1px 1px 0; }
.t { width: 10px; height: 10px; margin: 0 11px 0 27px; }
.open { width: 6px; height: 6px; margin: 0 3px 0 11px; color: #aaa; }
.fold { width: 9px; height: 9px; margin-right: 7px; }
.thumb { width: 16px; height: 21px; margin: 0 6px 0 22px; border: 1px solid #999; background: radial-gradient(circle at 3px 4px, #6b4a44 2px, transparent 2px), conic-gradient(#fff 25%, #ccc 0 50%, #fff 0 75%, #ccc 0) 0 0 / 4px 4px; }
.list .sbar i { height: 66px; flex: none; margin-top: 8px; }
.actions { height: 14px; flex: none; display: flex; align-items: center; justify-content: flex-end; gap: 8px; padding-right: 17px; border-top: 1px solid #454545; color: #ccc; }
.actions svg { width: 9px; height: 9px; }
.actions .off, .actions em { color: #858585; }
.actions em { font-size: 7px; }

.watermark { position: absolute; right: 10px; bottom: 16px; color: #262626; font: 300 35px/44px "Open Sans", "Noto Sans", sans-serif; }
.watermark span { color: #7c9a0c; }
```
